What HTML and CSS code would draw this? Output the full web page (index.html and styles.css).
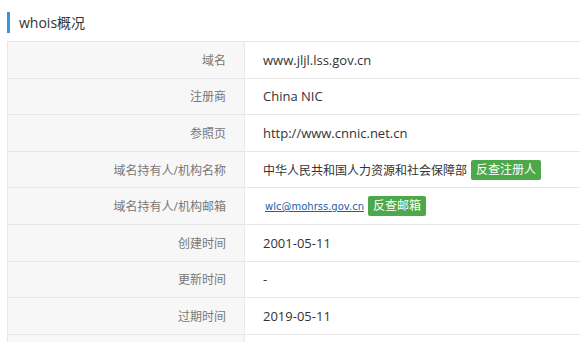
FILE: index.html
```html
<!DOCTYPE html>
<html lang="zh-CN">
<head>
<meta charset="utf-8">
<title>whois概况</title>
<link rel="stylesheet" href="styles.css">
</head>
<body>
<div class="panel">
  <h2 class="panel-title">whois概况</h2>
  <div class="table-wrap">
    <table class="whois">
      <tr><th>域名</th><td>www.jljl.lss.gov.cn</td></tr>
      <tr><th>注册商</th><td>China NIC</td></tr>
      <tr><th>参照页</th><td>http://www.cnnic.net.cn</td></tr>
      <tr><th>域名持有人/机构名称</th><td><span class="cn">中华人民共和国人力资源和社会保障部</span><a class="btn" href="#">反查注册人</a></td></tr>
      <tr><th>域名持有人/机构邮箱</th><td><a class="mail" href="#">wlc@mohrss.gov.cn</a><a class="btn" href="#">反查邮箱</a></td></tr>
      <tr><th>创建时间</th><td>2001-05-11</td></tr>
      <tr><th>更新时间</th><td>-</td></tr>
      <tr><th>过期时间</th><td>2019-05-11</td></tr>
      <tr><th></th><td></td></tr>
    </table>
  </div>
</div>
</body>
</html>
```
FILE: styles.css
```css
html, body {
  margin: 0;
  padding: 0;
  background: #fff;
}

body {
  font-family: "Open Sans", "Noto Sans CJK SC", sans-serif;
  color: #333;
}

.panel {
  padding: 12px 0 0 7px;
}

.panel-title {
  margin: 0;
  height: 21px;
  line-height: 21px;
  border-left: 3px solid #3a93dc;
  padding-left: 9px;
  font-size: 14px;
  font-weight: normal;
  color: #333;
}

.table-wrap {
  margin-top: 8px;
  height: 301px;
  overflow: hidden;
}

.whois {
  width: 600px;
  border-collapse: collapse;
  border-left: 1px solid #e6e6e6;
}

.whois tr {
  height: 36.6px;
}

.whois th,
.whois td {
  border-top: 1px solid #e6e6e6;
  padding: 0;
  vertical-align: middle;
}

.whois th {
  width: 218px;
  padding-right: 18px;
  background: #f7f7f7;
  border-right: 1px solid #e9e9e9;
  text-align: right;
  font-weight: normal;
  font-size: 12px;
  color: #777;
}

.whois td {
  padding-left: 18px;
  font-size: 13px;
  color: #333;
}

.cn {
  font-size: 12px;
  vertical-align: middle;
}

.mail {
  margin-left: 2px;
  font-family: "DejaVu Sans", sans-serif;
  font-size: 10px;
  color: #1d5fa6;
  text-decoration: underline;
  vertical-align: middle;
}

.btn {
  display: inline-block;
  margin-left: 4px;
  padding: 0 5px;
  height: 20px;
  line-height: 20px;
  border-radius: 2px;
  background: #4ca84a;
  color: #fff;
  font-size: 12px;
  text-decoration: none;
  vertical-align: middle;
}
```
